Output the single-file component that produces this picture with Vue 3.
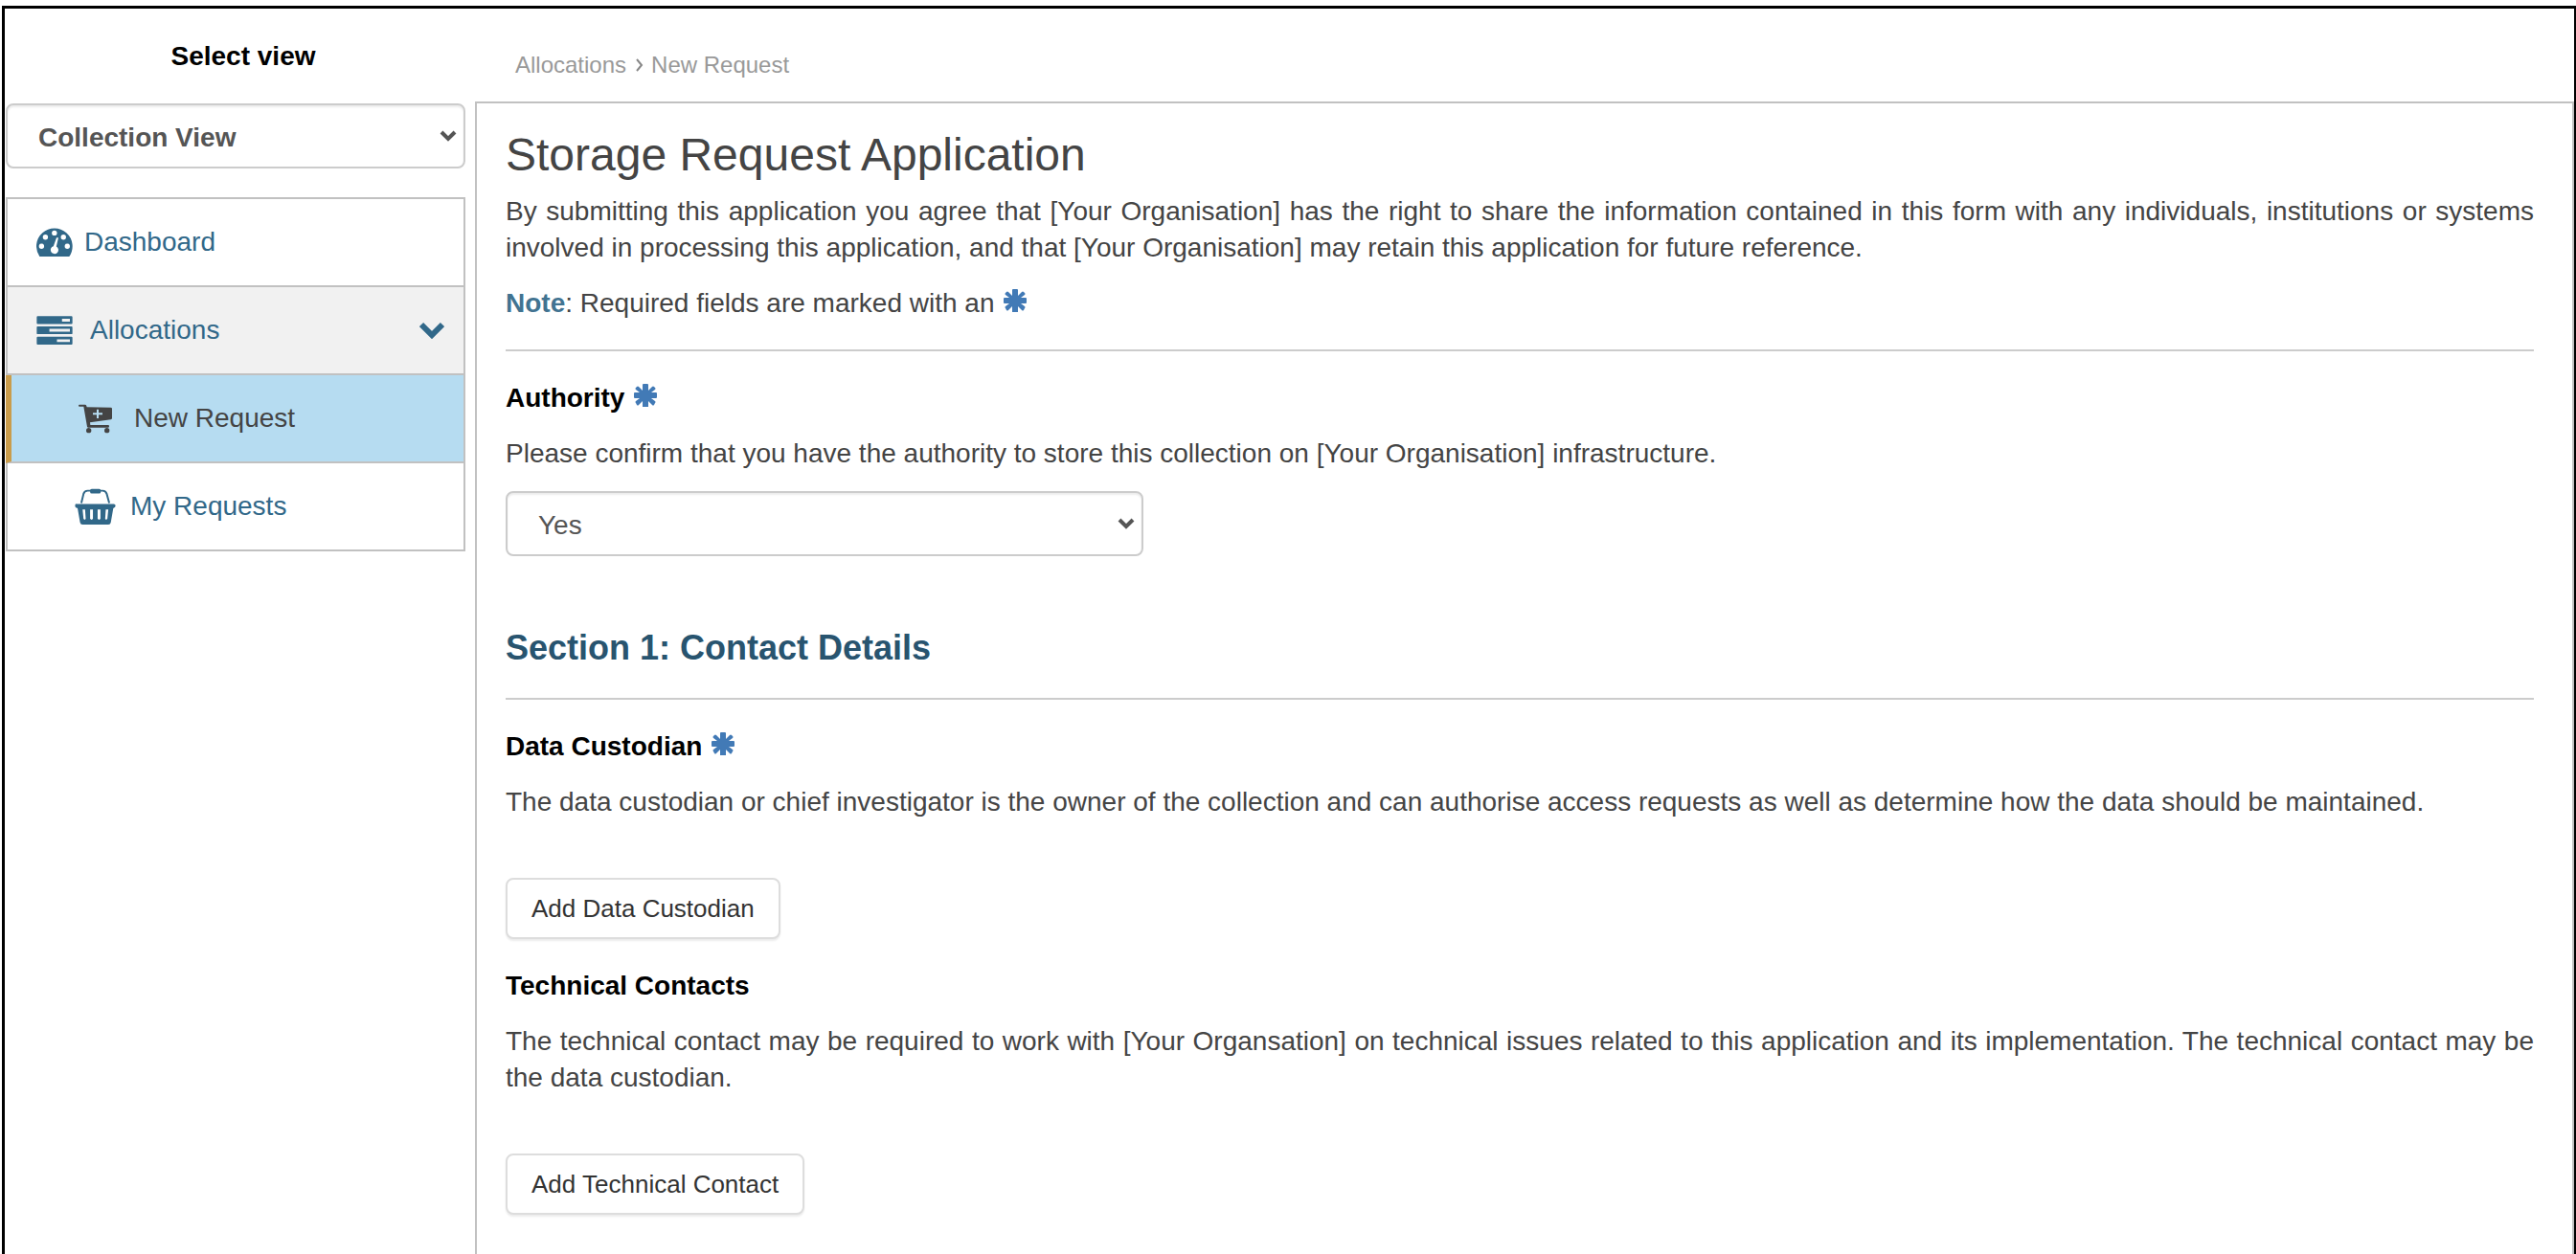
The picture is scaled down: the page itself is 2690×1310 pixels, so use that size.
<script setup>
import { ref } from 'vue'

const view = ref('collection')
const authority = ref('yes')
const open = ref(true)
const star =
  'M9 1q0-1 1-1h4q1 0 1 1v6l4-4q1-1 2 0l1 1q1 1 0 2l-4 3h5q1 0 1 1v4q0 1-1 1h-5l4 3q1 1 0 2l-1 2q-1 1-2 0l-4-4v6q0 1-1 1h-4q-1 0-1-1v-6l-4 4q-1 1-2 0l-1-2q-1-1 0-2l4-3H1q-1 0-1-1v-4q0-1 1-1h5L2 6q-1-1 0-2l1-1q1-1 2 0l4 4z'
</script>

<template>
  <div class="page">
    <div class="frame">
      <aside class="sidebar">
        <label class="view-label" for="view">Select view</label>
        <div class="select-wrap">
          <select id="view" v-model="view" class="select strong">
            <option value="collection">Collection View</option>
            <option value="project">Project View</option>
          </select>
          <svg class="caret" viewBox="0 0 18 12" aria-hidden="true"><path d="M2 2l7 7 7-7" /></svg>
        </div>

        <nav class="nav">
          <a class="item" href="#dashboard">
            <svg class="i-dash" viewBox="24 57 113 89" aria-hidden="true">
              <path
                fill="currentColor"
                fill-rule="evenodd"
                d="M34 146a56 56 0 1 1 92 0zM32 114a8 8 0 1 0 16 0a8 8 0 1 0-16 0M44 86a8 8 0 1 0 16 0a8 8 0 1 0-16 0M72 73a8 8 0 1 0 16 0a8 8 0 1 0-16 0M100 86a8 8 0 1 0 16 0a8 8 0 1 0-16 0M112 114a8 8 0 1 0 16 0a8 8 0 1 0-16 0M86 89q4-4 6 0l-6 26a12 12 0 1 1-9-1z"
              />
            </svg>
            <span>Dashboard</span>
          </a>
          <a class="item shaded" href="#allocations" @click.prevent="open = !open">
            <svg class="i-tasks" viewBox="24 24 113 91" aria-hidden="true">
              <path
                fill="currentColor"
                fill-rule="evenodd"
                d="M27 25h107q3 0 3 3v19q0 3-3 3H27q-3 0-3-3V28q0-3 3-3zM104 33v9h25v-9zM27 57h107q3 0 3 3v19q0 3-3 3H27q-3 0-3-3V60q0-3 3-3zM64 65v9h65v-9zM27 90h107q3 0 3 3v19q0 3-3 3H27q-3 0-3-3V93q0-3 3-3zM88 98v9h41v-9z"
              />
            </svg>
            <span>Allocations</span>
            <svg class="i-down" viewBox="0 0 26 18" aria-hidden="true"><path d="M2 3l11 11L24 3" /></svg>
          </a>
          <template v-if="open">
            <a class="item sub active" href="#new-request" aria-current="page">
              <svg class="i-cart" viewBox="36 67 108 93" aria-hidden="true">
                <g fill="currentColor">
                  <path
                    fill-rule="evenodd"
                    d="M39 69h17q4 0 5 4l1 4 75 1q4 0 4 4v30q0 3-4 4l-65 9 1 8h56q3 0 3 4t-3 4H67q-3 0-4-3L52 75H39q-3 0-3-3t3-3zM93 84v11H81v6h12v11h6v-11h12v-6H99V84z"
                  />
                  <circle cx="68" cy="150" r="8" />
                  <circle cx="125" cy="150" r="8" />
                </g>
              </svg>
              <span>New Request</span>
            </a>
            <a class="item sub" href="#my-requests">
              <svg class="i-basket" viewBox="24 328 129 116" aria-hidden="true">
                <path
                  fill="none"
                  stroke="currentColor"
                  stroke-width="6"
                  d="M44 375l7-29q3-10 13-10h48q10 0 13 10l8 29"
                />
                <rect x="72" y="330" width="34" height="15" rx="5" fill="currentColor" />
                <path
                  fill="currentColor"
                  fill-rule="evenodd"
                  d="M30 378h117q6 0 6 6t-6 7h-1l-8 46q-1 7-8 7H48q-7 0-8-7l-8-46h-2q-6 0-6-7t6-6zM48 396l3 30q4 5 7 0l-2-30zM72 396v30q5 5 9 0v-30zM96 396v30q5 5 9 0v-30zM122 396l-2 30q3 5 7 0l3-30z"
                />
              </svg>
              <span>My Requests</span>
            </a>
          </template>
        </nav>
      </aside>

      <main class="main">
        <div class="crumbs">
          <a href="#allocations">Allocations</a>
          <svg viewBox="0 0 8 14" aria-hidden="true"><path d="M1 1l5 6-5 6" /></svg>
          <span>New Request</span>
        </div>

        <div class="content">
          <h1>Storage Request Application</h1>
          <p>
            By submitting this application you agree that [Your Organisation] has the right to share the
            information contained in this form with any individuals, institutions or systems involved in
            processing this application, and that [Your Organisation] may retain this application for future
            reference.
          </p>
          <p class="note">
            <strong>Note</strong>: Required fields are marked with an
            <svg class="star" viewBox="0 0 24 24" aria-hidden="true"><path :d="star" /></svg>
          </p>
          <hr />

          <label class="field" for="authority">
            Authority
            <svg class="star" viewBox="0 0 24 24" aria-hidden="true"><path :d="star" /></svg>
          </label>
          <p>Please confirm that you have the authority to store this collection on [Your Organisation] infrastructure.</p>
          <div class="select-wrap authority">
            <select id="authority" v-model="authority" class="select">
              <option value="yes">Yes</option>
              <option value="no">No</option>
            </select>
            <svg class="caret" viewBox="0 0 18 12" aria-hidden="true"><path d="M2 2l7 7 7-7" /></svg>
          </div>

          <h2>Section 1: Contact Details</h2>
          <hr />

          <h3 class="field">
            Data Custodian
            <svg class="star" viewBox="0 0 24 24" aria-hidden="true"><path :d="star" /></svg>
          </h3>
          <p>
            The data custodian or chief investigator is the owner of the collection and can authorise access
            requests as well as determine how the data should be maintained.
          </p>
          <button type="button">Add Data Custodian</button>

          <h3 class="field">Technical Contacts</h3>
          <p>
            The technical contact may be required to work with [Your Organsation] on technical issues related to
            this application and its implementation. The technical contact may be the data custodian.
          </p>
          <button type="button">Add Technical Contact</button>
        </div>
      </main>
    </div>
  </div>
</template>

<style>
body {
  margin: 0;
  background: #fff;
}
</style>

<style scoped>
* {
  box-sizing: border-box;
}
.page {
  display: flex;
  min-height: 100vh;
  padding: 6px 0 0 2px;
  font: 28px/38px "Liberation Sans", Arial, sans-serif;
  color: #444;
}
.frame {
  flex: 1;
  display: flex;
  gap: 10px;
  padding-left: 1px;
  border: solid #000;
  border-width: 3px 2px 0 3px;
}
.sidebar {
  flex: 0 0 480px;
}
.view-label {
  display: block;
  padding: 31px 0 30px 16px;
  text-align: center;
  font-weight: bold;
  color: #000;
}
.select-wrap {
  display: grid;
  align-items: center;
}
.select-wrap > * {
  grid-area: 1 / 1;
}
.select {
  appearance: none;
  width: 100%;
  height: 68px;
  padding: 3px 32px 0;
  border: 2px solid #ccc;
  border-radius: 8px;
  background: #fff;
  box-shadow: inset 0 2px 2px rgba(0, 0, 0, 0.08);
  font: inherit;
  color: #555;
}
.strong {
  font-weight: bold;
}
.caret {
  justify-self: end;
  width: 18px;
  height: 12px;
  margin-right: 9px;
  fill: none;
  stroke: #555;
  stroke-width: 4;
  pointer-events: none;
}
.nav {
  margin-top: 30px;
  border: solid #c1c1c1;
  border-width: 2px 0 0;
}
.item {
  display: flex;
  align-items: center;
  height: 92px;
  padding: 0 20px 0 30px;
  border: 2px solid #c1c1c1;
  border-top: 0;
  color: #316889;
  text-decoration: none;
}
.shaded {
  background: #f1f1f1;
}
.sub {
  padding-left: 70px;
}
.active {
  border-left: 6px solid #c99c4b;
  background: #b6dcf1;
  color: #444;
}
.i-dash {
  width: 38px;
  height: 30px;
  margin-right: 12px;
}
.i-tasks {
  width: 38px;
  height: 30px;
  margin-right: 18px;
}
.i-cart {
  width: 36px;
  height: 31px;
  margin-right: 22px;
}
.i-basket {
  width: 43px;
  height: 38px;
  margin-right: 15px;
}
.i-down {
  width: 26px;
  height: 18px;
  margin-left: auto;
  fill: none;
  stroke: currentColor;
  stroke-width: 6;
}
.main {
  flex: 1;
  min-width: 0;
  display: flex;
  flex-direction: column;
}
.crumbs {
  display: flex;
  align-items: center;
  height: 97px;
  padding: 20px 0 0 42px;
  font-size: 24px;
  color: #999;
}
.crumbs a {
  color: inherit;
  text-decoration: none;
}
.crumbs svg {
  width: 8px;
  height: 14px;
  margin: 0 8px 0 10px;
  fill: none;
  stroke: #888;
  stroke-width: 2;
}
.content {
  flex: 1;
  padding: 26px 40px 40px 30px;
  border: 2px solid #c1c1c1;
  border-bottom: 0;
}
h1 {
  margin: 0 0 12px;
  font-size: 48px;
  line-height: 56px;
  font-weight: normal;
}
h2 {
  margin: 74px 0 30px;
  font-size: 36px;
  line-height: 44px;
  color: #28546f;
}
p {
  margin: 0 0 20px;
  text-align: justify;
}
.note {
  margin-bottom: 29px;
}
.note strong {
  color: #417391;
}
hr {
  height: 2px;
  margin: 0;
  border: 0;
  background: #ccc;
}
.field {
  display: block;
  margin: 30px 0 20px;
  font-size: 28px;
  line-height: 38px;
  font-weight: bold;
  color: #000;
}
.star {
  width: 24px;
  height: 24px;
  margin-left: 2px;
  fill: #427ab6;
}
.authority {
  width: 666px;
  max-width: 100%;
}
button {
  display: block;
  height: 64px;
  margin-top: 60px;
  padding: 0 25px;
  border: 2px solid #ddd;
  border-radius: 8px;
  background: #fff;
  box-shadow: 0 2px 2px rgba(0, 0, 0, 0.08);
  font: inherit;
  font-size: 26px;
  color: #333;
}
</style>
